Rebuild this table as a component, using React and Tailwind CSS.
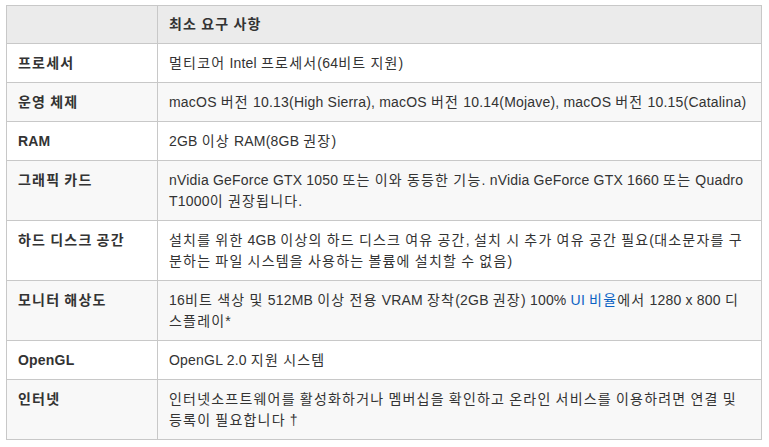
function K(text) {
  const parts = text.split(/([\uAC00-\uD7A3]+)/);
  return parts.map((p, i) =>
    /[\uAC00-\uD7A3]/.test(p) ? (
      <span key={i} className="tracking-[1.2px]">{p}</span>
    ) : (
      p
    )
  );
}

export default function App() {
  const rows = [
    ["프로세서", K("멀티코어 Intel 프로세서(64비트 지원)")],
    ["운영 체제", K("macOS 버전 10.13(High Sierra), macOS 버전 10.14(Mojave), macOS 버전 10.15(Catalina)")],
    ["RAM", K("2GB 이상 RAM(8GB 권장)")],
    ["그래픽 카드", <>{K("nVidia GeForce GTX 1050 또는 이와 동등한 기능. nVidia GeForce GTX 1660 또는 Quadro")}<br />{K("T1000이 권장됩니다.")}</>],
    ["하드 디스크 공간", <>{K("설치를 위한 4GB 이상의 하드 디스크 여유 공간, 설치 시 추가 여유 공간 필요(대소문자를 구")}<br />{K("분하는 파일 시스템을 사용하는 볼륨에 설치할 수 없음)")}</>],
    ["모니터 해상도", <>{K("16비트 색상 및 512MB 이상 전용 VRAM 장착(2GB 권장) 100% ")}<a className="text-[#0b62c4]" href="#">{K("UI 비율")}</a>{K("에서 1280 x 800 디")}<br />{K("스플레이*")}</>],
    ["OpenGL", K("OpenGL 2.0 지원 시스템")],
    ["인터넷", <>{K("인터넷소프트웨어를 활성화하거나 멤버십을 확인하고 온라인 서비스를 이용하려면 연결 및")}<br />{K("등록이 필요합니다 †")}</>],
  ];
  return (
    <div className="w-[769px] h-[447px] bg-white pt-[5px] pl-[6px] text-[14px] text-[#333333] tracking-[0.2px]" style={{ fontFamily: '"Liberation Sans", Arial, "Noto Sans CJK KR", sans-serif' }}>
      <table className="w-[756px] border-collapse">
        <thead>
          <tr className="bg-[#ebebeb]">
            <th className="w-[151px] border border-[#c8c8c8] px-[11px] py-[8px] leading-[21px]"></th>
            <th className="border border-[#c8c8c8] px-[11px] py-[8px] leading-[21px] text-left font-bold">{K("최소 요구 사항")}</th>
          </tr>
        </thead>
        <tbody>
          {rows.map(([k, v], i) => (
            <tr key={i} className={i % 2 === 1 ? "bg-[#f8f8f8]" : "bg-white"}>
              <td className="align-top border border-[#c8c8c8] px-[11px] py-[8.5px] leading-[21px] font-bold whitespace-nowrap">{K(k)}</td>
              <td className="align-top border border-[#c8c8c8] px-[11px] py-[8.5px] leading-[21px] whitespace-nowrap">{v}</td>
            </tr>
          ))}
        </tbody>
      </table>
    </div>
  );
}
